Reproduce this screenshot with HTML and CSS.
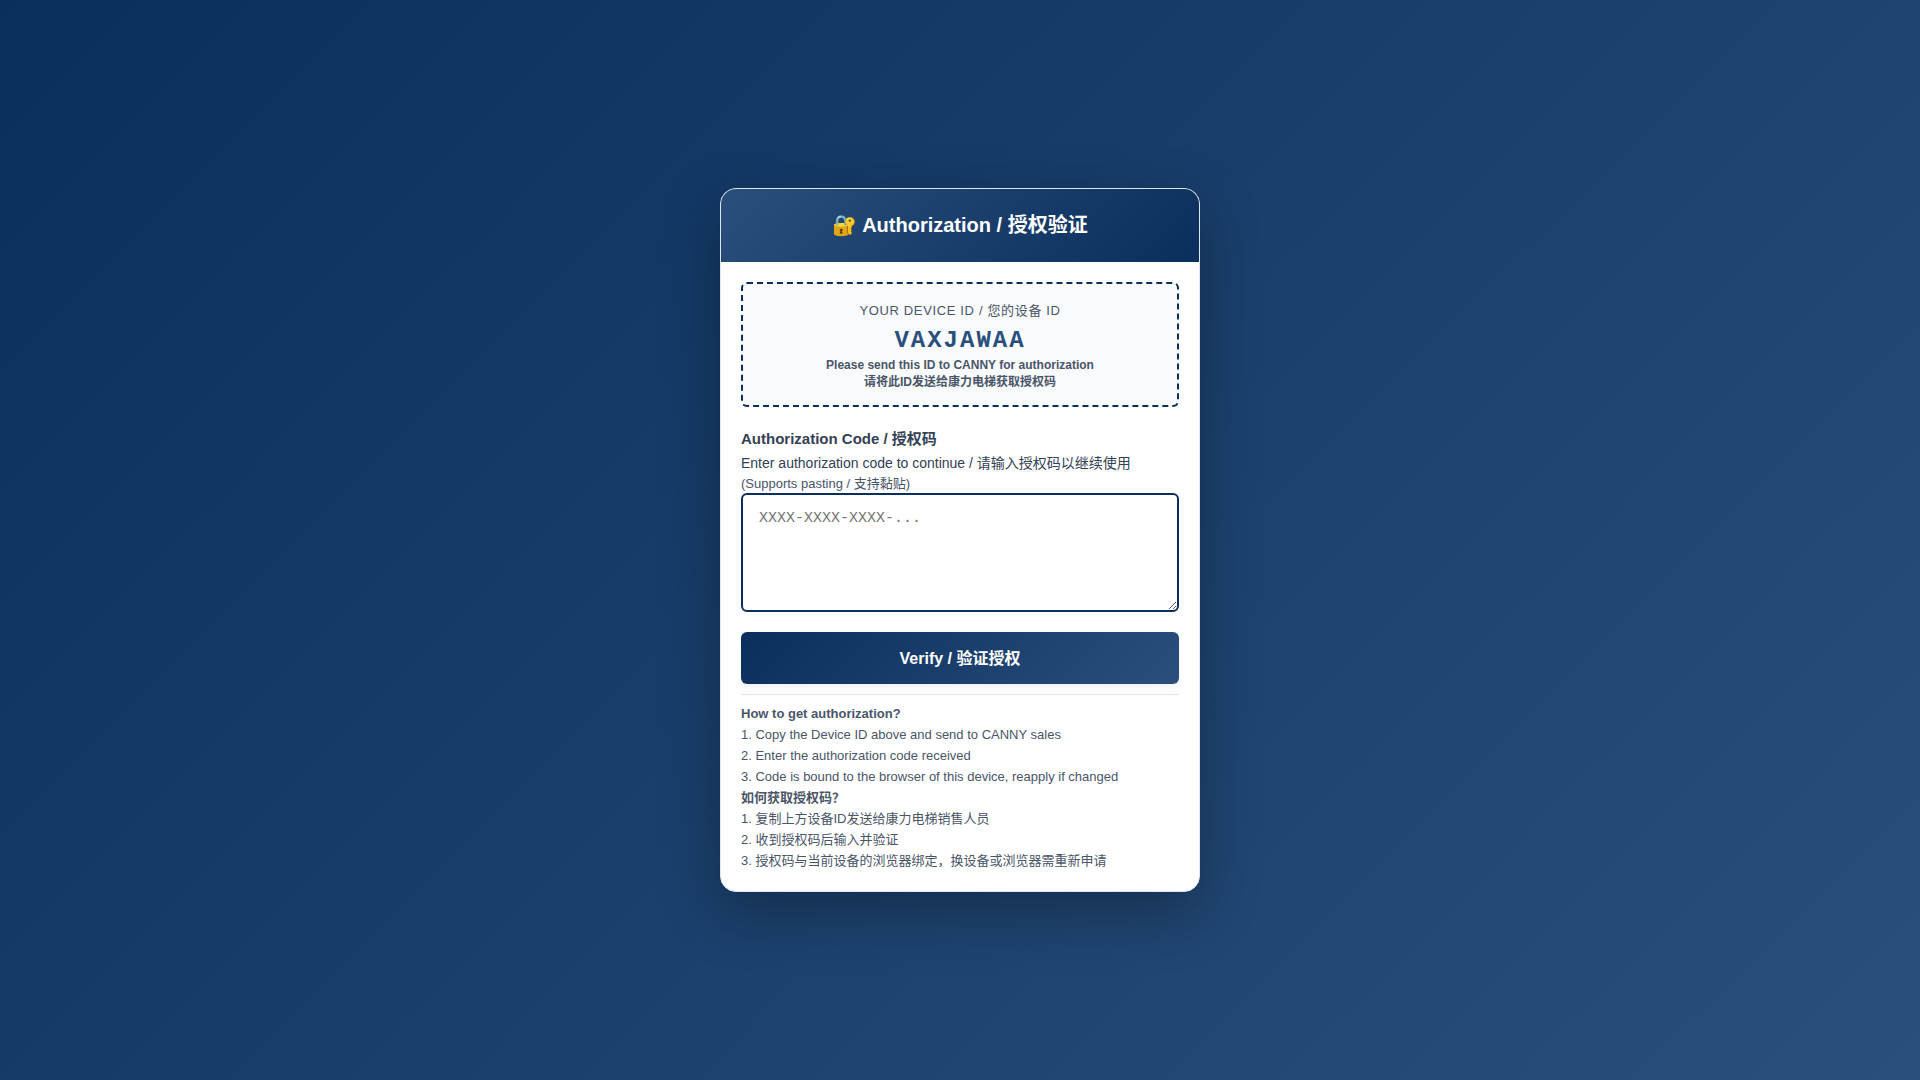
FILE: index.html
```html
<!DOCTYPE html>
<html lang="zh-CN">
<head>
    <meta charset="UTF-8">
    <meta name="viewport" content="width=device-width, initial-scale=1.0">
    <title>Authorization / 授权验证</title>
    <link rel="stylesheet" href="styles.css">
</head>
<body>
    <div class="auth-container">
        <div class="auth-header">
            <h1>🔐 Authorization / 授权验证</h1>
        </div>
        <div class="auth-body">
            <!-- 设备 ID -->
            <div class="device-box">
                <div class="device-label">Your Device ID / 您的设备 ID</div>
                <div class="device-id" id="deviceId">VAXJAWAA</div>
                <div class="device-hint">Please send this ID to CANNY for authorization<br>请将此ID发送给康力电梯获取授权码</div>
            </div>

            <!-- 授权码输入 -->
            <form class="auth-form" onsubmit="event.preventDefault()">
                <label for="authCode">Authorization Code / 授权码</label>
                <p class="form-text">Enter authorization code to continue / 请输入授权码以继续使用</p>
                <p class="form-note">(Supports pasting / 支持黏贴)</p>
                <textarea id="authCode" placeholder="XXXX-XXXX-XXXX-..."></textarea>
                <button type="submit" class="verify-button">Verify / 验证授权</button>
            </form>

            <div class="auth-help">
                <strong>How to get authorization?</strong><br>
                1. Copy the Device ID above and send to CANNY sales<br>
                2. Enter the authorization code received<br>
                3. Code is bound to the browser of this device, reapply if changed<br>
                <strong>如何获取授权码？</strong><br>
                1. 复制上方设备ID发送给康力电梯销售人员<br>
                2. 收到授权码后输入并验证<br>
                3. 授权码与当前设备的浏览器绑定，换设备或浏览器需重新申请
            </div>
        </div>
    </div>
</body>
</html>
```
FILE: styles.css
```css
* {
    box-sizing: border-box;
    margin: 0;
    padding: 0;
}

body {
    font-family: "Liberation Sans", "Noto Sans CJK SC", sans-serif;
    min-height: 100vh;
    display: flex;
    align-items: center;
    justify-content: center;
    background: linear-gradient(135deg, #0a2f5c 0%, #2a4f7c 100%);
    color: #334155;
}

.auth-container {
    width: 100%;
    max-width: 480px;
    background: white;
    border: 1px solid #dde6f0;
    border-radius: 16px;
    box-shadow: 0 20px 60px rgba(0, 0, 0, 0.3);
    overflow: hidden;
}

.auth-header {
    padding: 24px 20px;
    background: linear-gradient(135deg, #2a4f7c 0%, #0a2f5c 100%);
    color: white;
    text-align: center;
}

.auth-header h1 {
    font-size: 20px;
    line-height: 25px;
}

.auth-body {
    padding: 20px;
}

.device-box {
    padding: 16px 16px 14px;
    margin-bottom: 20px;
    background: #f8fafc;
    border: 2px dashed #0a2f5c;
    border-radius: 6px;
    text-align: center;
}

.device-label {
    font-size: 13px;
    line-height: 22px;
    letter-spacing: 0.05em;
    text-transform: uppercase;
    color: #4a5568;
}

.device-id {
    margin: 5px 0 2px;
    font-family: "Liberation Mono", monospace;
    font-size: 24px;
    line-height: 28px;
    font-weight: bold;
    letter-spacing: 2px;
    color: #2a4f7c;
}

.device-hint {
    font-size: 12px;
    line-height: 17px;
    font-weight: bold;
    color: #4a5568;
}

.auth-form label {
    display: block;
    font-size: 15px;
    line-height: 24px;
    font-weight: bold;
}

.form-text {
    font-size: 14px;
    line-height: 24px;
}

.form-note {
    font-size: 13px;
    line-height: 18px;
    color: #4a5568;
}

textarea {
    display: block;
    width: 100%;
    height: 119px;
    padding: 15px 16px;
    border: 2px solid #0a2f5c;
    border-radius: 6px;
    font-family: "Liberation Mono", monospace;
    font-size: 15px;
    resize: vertical;
}

.verify-button {
    display: block;
    width: 100%;
    margin: 20px 0 10px;
    padding: 15px 14px 13px;
    border: none;
    border-radius: 6px;
    background: linear-gradient(135deg, #0a2f5c 0%, #2a4f7c 100%);
    box-shadow: 0 4px 6px rgba(0, 0, 0, 0.05);
    color: white;
    font-family: inherit;
    font-size: 16px;
    line-height: 24px;
    font-weight: bold;
    cursor: pointer;
}

.auth-help {
    padding-top: 8px;
    border-top: 1px solid #dde6f0;
    font-size: 13px;
    line-height: 21px;
    color: #4a5568;
}
```
